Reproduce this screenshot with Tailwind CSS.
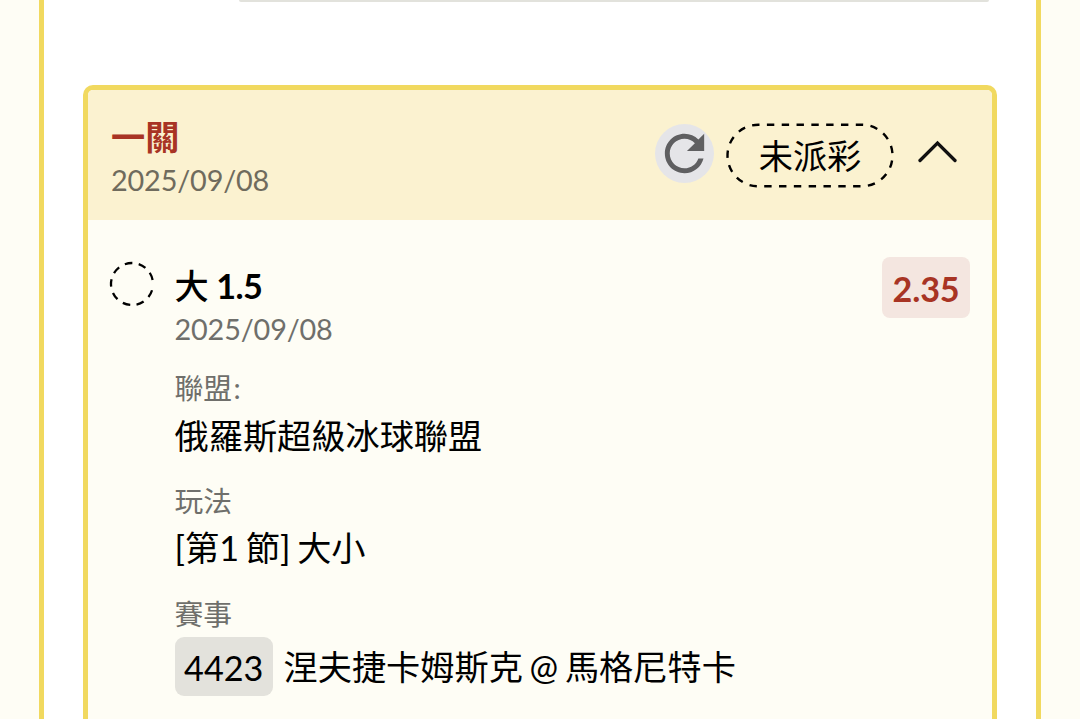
<!DOCTYPE html>
<html lang="zh-Hant">
  <head>
    <meta charset="UTF-8" />
    <meta name="viewport" content="width=device-width, initial-scale=1.0" />
    <title>投注紀錄</title>
    <script src="https://cdn.jsdelivr.net/npm/@tailwindcss/browser@4"></script>
  </head>
  <body
    class="h-screen overflow-hidden bg-[#fefdf5] font-[Lato,'Noto_Sans_CJK_TC',sans-serif] text-[34.2px] text-black whitespace-nowrap"
  >
    <main
      class="mx-auto flex flex-col w-[1002px] h-screen border-x-5 border-[#f1d95f] bg-white"
    >
      <!-- previous field -->
      <div
        class="shrink-0 ml-[195px] w-[750px] h-[2px] rounded-b-lg bg-[#e2e2dc]"
      ></div>
      <!-- bet card -->
      <section
        class="flex-1 min-h-0 mt-[83px] ml-[39px] w-[914px] overflow-hidden rounded-t-[10px] border-5 border-b-0 border-[#f1d95f] bg-[#fefdf5]"
      >
        <header
          class="flex justify-between h-[130px] pl-[23px] pr-[35px] bg-[#fbf2d0]"
        >
          <div class="pt-[25px]">
            <h2 class="leading-[44px] font-bold text-[#a83424]">一關</h2>
            <p
              class="text-[28.8px] leading-[42px] tracking-[-0.15px] text-[#6f6b5d]"
            >
              2025/09/08
            </p>
          </div>
          <div class="flex items-start pt-[33px]">
            <button
              type="button"
              class="mt-[1px] mr-[12px] size-[59px] rounded-full bg-[#e5e5e8]"
            >
              <svg viewBox="0 0 24 24" class="size-[59px]" fill="#5f5f61">
                <path
                  d="M17.65 6.35C16.2 4.9 14.21 4 12 4c-4.42 0-7.99 3.58-7.99 8s3.57 8 7.99 8c3.73 0 6.84-2.55 7.73-6h-2.08c-.82 2.33-3.04 4-5.65 4-3.31 0-6-2.69-6-6s2.69-6 6-6c1.66 0 3.14.69 4.22 1.78L13 11h7V4l-2.35 2.35z"
                />
              </svg>
            </button>
            <div class="relative w-[168px] h-[65px] text-center leading-[66px]">
              <svg
                viewBox="0 0 168 65"
                class="absolute inset-0 w-[168px] h-[65px]"
                fill="none"
                stroke="#000"
                stroke-width="2.4"
              >
                <rect
                  x="1.5"
                  y="1.7"
                  width="165"
                  height="61.6"
                  rx="30.8"
                  pathLength="405"
                  stroke-dasharray="7.5 7.5"
                  stroke-dashoffset="6.3"
                />
              </svg>
              未派彩
            </div>
            <svg
              viewBox="0 0 40 24"
              class="mt-[17px] ml-[23px] w-[40px] h-[24px]"
              fill="none"
              stroke="#111"
              stroke-width="3.3"
            >
              <path stroke-linecap="round" d="M3 20.5L20.5 3l17.5 17.5" />
            </svg>
          </div>
        </header>
        <div class="flex items-start pt-[37px] pl-[21px] pr-[22px]">
          <svg
            viewBox="0 0 46 46"
            class="mt-[4px] size-[46px]"
            fill="none"
            stroke="#000"
            stroke-width="2.3"
          >
            <circle
              cx="23"
              cy="23"
              r="21"
              pathLength="360"
              stroke-dasharray="21 17.75"
              stroke-dashoffset="-17.5"
            />
          </svg>
          <div class="ml-[19.5px] flex-1">
            <h3 class="pt-[7px] leading-[44px] font-medium">
              大
              <span class="-ml-[1px] font-bold tracking-[-0.7px]">1.5</span>
            </h3>
            <p
              class="text-[28.8px] leading-[43px] tracking-[-0.15px] text-[#6f6f6b]"
            >
              2025/09/08
            </p>
            <dl class="[word-spacing:-2px]">
              <dt class="mt-[16px] text-[28.8px] leading-[43px] text-[#6f6f6b]">
                聯盟<span class="ml-[1.5px]">:</span>
              </dt>
              <dd class="leading-[52px]">俄羅斯超級冰球聯盟</dd>
              <dt class="mt-[18px] text-[28.8px] leading-[43px] text-[#6f6f6b]">
                玩法
              </dt>
              <dd class="leading-[50px]">[第1 節] 大小</dd>
              <dt class="mt-[20px] text-[28.8px] leading-[43px] text-[#6f6f6b]">
                賽事
              </dt>
              <dd class="mt-[1px] flex h-[59px] leading-[59px]">
                <span
                  class="mr-[10.5px] w-[98.5px] rounded-[9px] bg-[#e3e2dc] text-center leading-[61px]"
                  >4423</span
                >
                涅夫捷卡姆斯克 @ 馬格尼特卡
              </dd>
            </dl>
          </div>
          <span
            class="w-[88px] h-[61px] rounded-[8px] bg-[#f4e6e0] text-center leading-[63px] font-bold tracking-[-0.2px] text-[#a83424]"
            >2.35</span
          >
        </div>
      </section>
    </main>
  </body>
</html>
